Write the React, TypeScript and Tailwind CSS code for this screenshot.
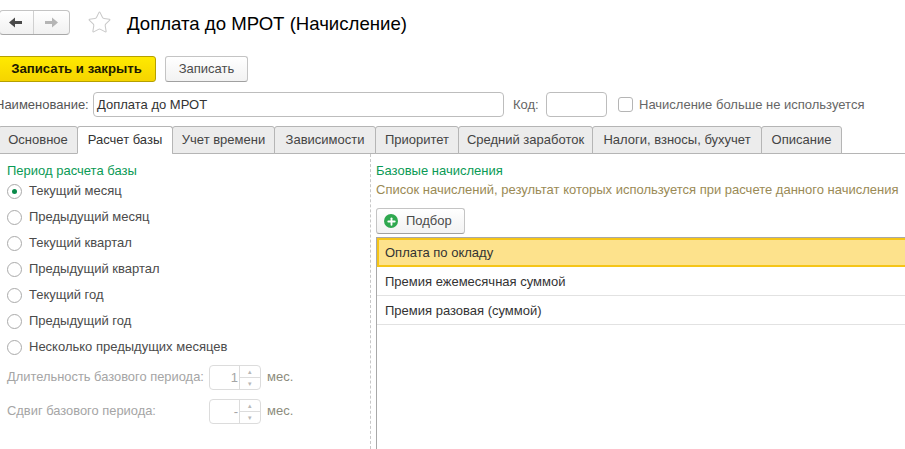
import { Plus, Star } from 'lucide-react';

const tabs = [
  { label: 'Основное', width: 'w-[80px]' },
  { label: 'Расчет базы', width: 'w-[96px]' },
  { label: 'Учет времени', width: 'w-[103px]' },
  { label: 'Зависимости', width: 'w-[102px]' },
  { label: 'Приоритет', width: 'w-[84px]' },
  { label: 'Средний заработок', width: 'w-[135px]' },
  { label: 'Налоги, взносы, бухучет', width: 'w-[170px]' },
  { label: 'Описание', width: 'w-[81px]' },
];
const periods = ['Текущий месяц', 'Предыдущий месяц', 'Текущий квартал', 'Предыдущий квартал', 'Текущий год', 'Предыдущий год', 'Несколько предыдущих месяцев'];
const rows = ['Оплата по окладу', 'Премия ежемесячная суммой', 'Премия разовая (суммой)'];

function Spinner({ value, label, top }: { value: string; label: string; top: string }) {
  return (
    <div className={`flex h-[26px] items-center ${top}`}>
      <span className="w-[202px] whitespace-nowrap text-[12.9px] text-[#a5a5a5]">{label}</span>
      <div className="flex h-[25px] w-[52px] rounded-[4px] border border-[#dcdcdc]">
        <span className="w-[29px] pr-[1px] text-right leading-[23px] text-[#a5a5a5]">{value}</span>
        <div className="flex w-[21px] flex-col border-l border-[#dcdcdc] text-center text-[7px] leading-[11px] text-[#b8b8b8]">
          <span className="h-[12px] border-b border-[#dcdcdc]">▴</span>
          <span>▾</span>
        </div>
      </div>
      <span className="ml-[6px] text-[#8c8c7c]">мес.</span>
    </div>
  );
}

function NavArrow({ color, flip }: { color: string; flip?: boolean }) {
  return (
    <svg width="15" height="13" viewBox="0 0 15 13" className={`${color} ${flip ? 'rotate-180' : ''}`}>
      <path d="M1 6.5 L7 1.5 V5 H14 V8 H7 V11.5 Z" fill="currentColor" />
    </svg>
  );
}

export default function App() {
  return (
    <div className="h-[449px] w-[905px] overflow-hidden bg-white font-['Liberation_Sans',Arial,sans-serif] text-[13px] text-[#4b4b4b]">
      <div className="flex h-[56px] items-start pt-[10px]">
        <div className="-ml-[1px] flex h-[25px] w-[71px] rounded-[4px] border border-[#c4c4c4] border-b-[#a8a8a8] bg-gradient-to-b from-white to-[#f1f1f1]">
          <div className="flex w-[34px] items-center justify-end border-r border-[#d0d0d0] pr-[10px]">
            <NavArrow color="text-[#4a4a4a]" />
          </div>
          <div className="flex flex-1 items-center justify-center">
            <NavArrow color="text-[#b5b5b5]" flip />
          </div>
        </div>
        <Star size={25} strokeWidth={1} className="ml-[17px] text-[#c9c9c9]" />
        <h1 className="ml-[15px] text-[18.6px] leading-[28px] text-black">Доплата до МРОТ (Начисление)</h1>
      </div>

      <div className="flex h-[26px]">
        <button className="-ml-[3px] h-[26px] w-[159px] rounded-[3px] border border-[#b5a000] bg-gradient-to-b from-[#ffea00] to-[#f5d400] text-[13.2px] font-bold text-[#1d1a00]">Записать и закрыть</button>
        <button className="ml-[9px] h-[26px] w-[83px] rounded-[3px] border border-[#c4c4c4] border-b-[#a0a0a0] bg-gradient-to-b from-white to-[#f2f2f2]">Записать</button>
      </div>

      <div className="mt-[10px] flex h-[25px] items-center">
        <span className="-ml-[5px] w-[98px] whitespace-nowrap text-[#555]">Наименование:</span>
        <div className="h-[25px] w-[411px] rounded-[4px] border border-[#bdbdbd] pl-[3px] leading-[23px] text-[#333]">Доплата до МРОТ</div>
        <span className="ml-[9px] w-[33px] text-[#666]">Код:</span>
        <div className="h-[25px] w-[61px] rounded-[4px] border border-[#bdbdbd]" />
        <div className="ml-[11px] h-[15px] w-[15px] rounded-[3px] border border-[#b5b5b5]" />
        <span className="ml-[6px] text-[#666]">Начисление больше не используется</span>
      </div>

      <div className="mt-[9px] flex h-[28px] border-b border-[#b5b5b5]">
        {tabs.map((tab, i) => (
          <div
            key={tab.label}
            className={`-ml-[1px] h-[28px] whitespace-nowrap rounded-t-[3px] border border-[#b5b5b5] text-center leading-[26px] first:ml-[-2px] ${tab.width} ${
              i === 1 ? 'border-b-white bg-white text-[#333]' : 'bg-[#ececec] text-[#444]'
            }`}
          >
            {tab.label}
          </div>
        ))}
      </div>

      <div className="flex">
        <div className="h-[295px] w-[371px] border-r border-dashed border-[#c8c8c8] pl-[7px] pt-[9px]">
          <div className="leading-[16px] text-[#0a9a55]">Период расчета базы</div>
          <div className="-mt-[1px] flex flex-col">
            {periods.map((period, i) => (
              <div key={period} className="flex h-[26px] items-center">
                <span className="flex h-[15px] w-[15px] items-center justify-center rounded-full border border-[#aaaaaa]">
                  {i === 0 && <span className="h-[5px] w-[5px] rounded-full bg-[#0a8a4a]" />}
                </span>
                <span className="ml-[7px]">{period}</span>
              </div>
            ))}
          </div>
          <Spinner label="Длительность базового периода:" value="1" top="mt-[4px]" />
          <Spinner label="Сдвиг базового периода:" value="-" top="mt-[8px]" />
        </div>

        <div className="min-w-0 flex-1 pl-[5px] pt-[9px]">
          <div className="leading-[16px] text-[#0a9a55]">Базовые начисления</div>
          <div className="mt-[3px] whitespace-nowrap leading-[16px] text-[#9a8a55]">Список начислений, результат которых используется при расчете данного начисления</div>
          <button className="mt-[10px] flex h-[26px] w-[89px] items-center rounded-[3px] border border-[#c4c4c4] border-b-[#a0a0a0] bg-gradient-to-b from-white to-[#f2f2f2] pl-[7px]">
            <span className="flex h-[14px] w-[14px] items-center justify-center rounded-full bg-[#2fa84f]">
              <Plus size={11} strokeWidth={4} className="text-white" />
            </span>
            <span className="ml-[8px]">Подбор</span>
          </button>
          <div className="mt-[3px] h-[220px] border-l border-t border-[#a8a8a8]">
            {rows.map((row, i) => (
              <div
                key={row}
                className={`h-[29px] text-[#333] ${
                  i === 0 ? '-mr-[4px] border-2 border-[#f5c518] bg-[#fde28c] pl-[6px] leading-[25px]' : 'border-b border-[#e2e2e2] pl-[8px] leading-[29px]'
                }`}
              >
                {row}
              </div>
            ))}
          </div>
        </div>
      </div>
    </div>
  );
}
